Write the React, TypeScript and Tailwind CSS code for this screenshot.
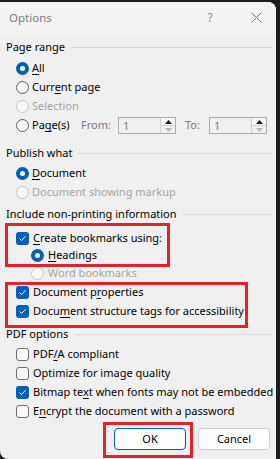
import React from "react";

const font = { fontFamily: '"Segoe UI", "Noto Sans", "Open Sans", sans-serif' };

function U({ children }: { children: React.ReactNode }) {
  return <span className="underline underline-offset-[2px] decoration-1">{children}</span>;
}

function Radio({ checked, disabled }: { checked?: boolean; disabled?: boolean }) {
  if (checked)
    return (
      <span className="flex h-[13px] w-[13px] shrink-0 items-center justify-center rounded-full bg-[#005fb8]">
        <span className="h-[5px] w-[5px] rounded-full bg-white" />
      </span>
    );
  return (
    <span
      className={
        "h-[13px] w-[13px] shrink-0 rounded-full border " +
        (disabled ? "border-[#c8c8c8] bg-[#f7f7f7]" : "border-[#5e5e5e] bg-[#f7f7f7]")
      }
    />
  );
}

function Check({ checked }: { checked?: boolean }) {
  if (checked)
    return (
      <span className="flex h-[13px] w-[13px] shrink-0 items-center justify-center rounded-[3px] bg-[#005fb8]">
        <svg width="9" height="9" viewBox="0 0 9 9" fill="none">
          <path d="M1.8 4.8 L3.6 6.5 L7.2 2.6" stroke="white" strokeWidth="1" strokeLinecap="round" strokeLinejoin="round" />
        </svg>
      </span>
    );
  return <span className="h-[13px] w-[13px] shrink-0 rounded-[3px] border border-[#6e6e6e] bg-[#fbfbfb]" />;
}

function Header({ children, mt }: { children: React.ReactNode; mt: string }) {
  return (
    <div className={"flex h-[19px] items-center pl-[6px] pr-[4px] " + mt}>
      <span className="whitespace-nowrap text-[11px] text-black">{children}</span>
      <span className="ml-[6px] h-px flex-1 bg-[#d9d9d9]" />
    </div>
  );
}

function Row({
  control,
  children,
  disabled,
  indent = "pl-[16px]",
  gap = "gap-[4px]",
  h = "h-[19px]",
}: {
  control: React.ReactNode;
  children: React.ReactNode;
  disabled?: boolean;
  indent?: string;
  gap?: string;
  h?: string;
}) {
  return (
    <div className={"flex items-center " + h + " " + indent + " " + gap}>
      {control}
      <span className={"whitespace-nowrap text-[11px] " + (disabled ? "text-[#a3a3a3]" : "text-black")}>{children}</span>
    </div>
  );
}

function Spin() {
  return (
    <div className="flex h-[17px] w-[58px] shrink-0 border border-[#acacac] bg-[#f0f0f0]">
      <span className="flex-1 pl-[4px] text-[11px] leading-[16px] text-[#7a7a7a]">1</span>
      <div className="flex w-[15px] flex-col border-l border-[#d0d0d0]">
        <div className="flex flex-1 items-center justify-center border-b border-[#d0d0d0] bg-[#f6f6f6]">
          <svg width="7" height="4" viewBox="0 0 7 4">
            <path d="M0 4 L3.5 0 L7 4 Z" fill="#1a1a1a" />
          </svg>
        </div>
        <div className="flex flex-1 items-center justify-center bg-[#f0f0f0]">
          <svg width="7" height="4" viewBox="0 0 7 4">
            <path d="M0 0 L3.5 4 L7 0 Z" fill="#b5b5b5" />
          </svg>
        </div>
      </div>
    </div>
  );
}

export default function App() {
  return (
    <div className="h-[459px] w-[280px] overflow-hidden bg-[#1c1c1c] pt-[2px]" style={font}>
      <div className="relative h-[457px] w-[276px] overflow-hidden rounded-tr-[8px] rounded-bl-[8px] bg-[#f0f0f0]">
        {/* title bar */}
        <div className="flex h-[31px] items-center bg-[#f3f3f3]">
          <span className="pl-[9px] text-[11.5px] text-[#7b7b7b]">Options</span>
          <span className="ml-auto w-[12px] text-center text-[12px] text-[#8a8a8a]">?</span>
          <span className="ml-[34px] mr-[14px] flex w-[12px] justify-center">
            <svg width="11" height="11" viewBox="0 0 11 11">
              <path d="M0.5 0.5 L10.5 10.5 M10.5 0.5 L0.5 10.5" stroke="#7a7a7a" strokeWidth="1" />
            </svg>
          </span>
        </div>

        <Header mt="mt-[5px]">Page range</Header>
        <div className="mt-[2px]">
          <Row control={<Radio checked />} gap="gap-[3px]">
            <U>A</U>ll
          </Row>
          <Row control={<Radio />} gap="gap-[3px]">
            Curr<U>e</U>nt page
          </Row>
          <Row control={<Radio disabled />} disabled gap="gap-[3px]">
            Selection
          </Row>
          <div className="flex h-[19px] items-center pl-[16px]">
            <Radio />
            <span className="ml-[3px] w-[49px] whitespace-nowrap text-[11px] text-black">
              Pa<U>g</U>e(s)
            </span>
            <span className="w-[37px] text-[11px] text-[#7a7a7a]">From:</span>
            <Spin />
            <span className="ml-[9px] w-[24px] text-[11px] text-[#7a7a7a]">To:</span>
            <Spin />
          </div>
        </div>

        <Header mt="mt-[9px]">Publish what</Header>
        <div className="mt-[1px]">
          <Row control={<Radio checked />} gap="gap-[3px]">
            <U>D</U>ocument
          </Row>
          <Row control={<Radio disabled />} disabled gap="gap-[3px]">
            Document showing markup
          </Row>
        </div>

        <Header mt="mt-[3px]">Include non-printing information</Header>
        <div className="mt-[5px]">
          <Row control={<Check checked />} h="h-[18px]">
            <U>C</U>reate bookmarks using:
          </Row>
          <Row control={<Radio checked />} indent="pl-[31px]" gap="gap-[4px]" h="h-[17px]">
            <U>H</U>eadings
          </Row>
          <Row control={<Radio disabled />} disabled indent="pl-[31px]" gap="gap-[4px]">
            Word bookmarks
          </Row>
          <Row control={<Check checked />}>
            Document p<U>r</U>operties
          </Row>
          <Row control={<Check checked />}>
            Docu<U>m</U>ent structure tags for accessibility
          </Row>
        </div>

        <Header mt="mt-[4px]">PDF options</Header>
        <div className="mt-[1px]">
          <Row control={<Check />}>
            PDF<U>/</U>A compliant
          </Row>
          <Row control={<Check />}>Optimize for image quality</Row>
          <Row control={<Check checked />}>
            Bitmap te<U>x</U>t when fonts may not be embedded
          </Row>
          <Row control={<Check />}>
            E<U>n</U>crypt the document with a password
          </Row>
        </div>

        <div className="mt-[7px] flex justify-end gap-[12px] pr-[6px]">
          <button className="h-[22px] w-[72px] rounded-[4px] border border-[#005fb8] bg-[#fdfdfd] text-[11px] text-black">
            OK
          </button>
          <button className="h-[22px] w-[72px] rounded-[4px] border border-[#d0d0d0] bg-[#fdfdfd] text-[11px] text-black">
            Cancel
          </button>
        </div>

        {/* annotation boxes */}
        <div className="absolute left-[5px] top-[221px] h-[44px] w-[165px] border-[3px] border-[#e4222a]" />
        <div className="absolute left-[5px] top-[280px] h-[46px] w-[243px] border-[3px] border-[#e4222a]" />
        <div className="absolute left-[103px] top-[420px] h-[36px] w-[90px] border-[3px] border-[#e4222a]" />
      </div>
    </div>
  );
}
